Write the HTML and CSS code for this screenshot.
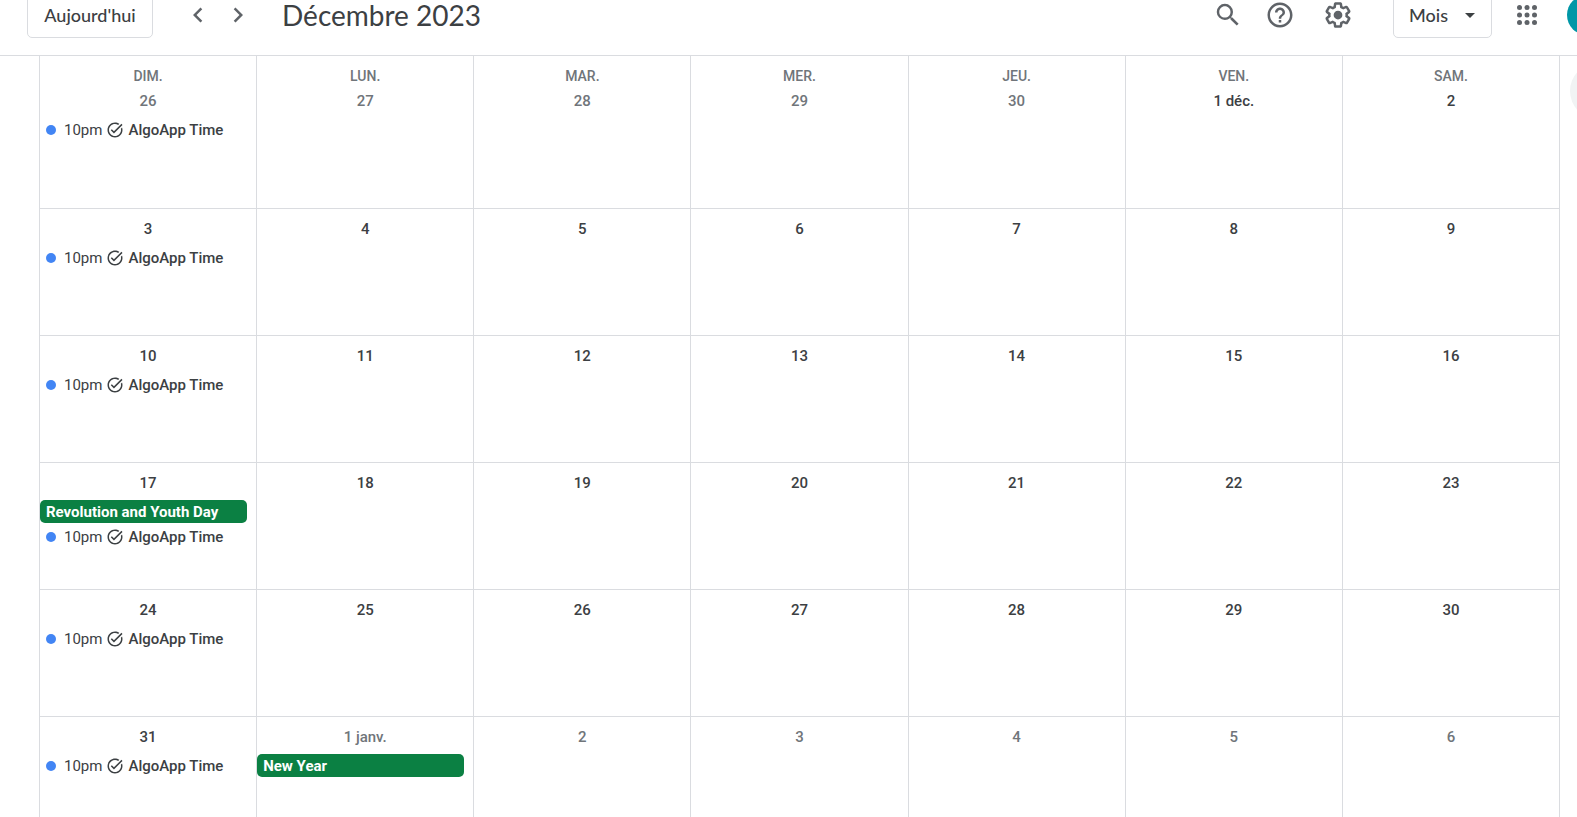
FILE: index.html
```html
<!DOCTYPE html>
<html lang="fr">
<head>
<meta charset="utf-8">
<title>Agenda - Décembre 2023</title>
<link rel="stylesheet" href="styles.css">
</head>
<body>
<svg class="sprite" aria-hidden="true">
  <symbol id="task" viewBox="0 0 24 24"><path d="M22 5.18L10.59 16.6l-4.24-4.24 1.41-1.41 2.83 2.83 10-10L22 5.18zM19.79 10.22C19.92 10.79 20 11.39 20 12c0 4.42-3.58 8-8 8s-8-3.58-8-8c0-4.42 3.58-8 8-8 1.58 0 3.04.46 4.28 1.25l1.44-1.44C16.1 2.67 14.13 2 12 2 6.48 2 2 6.48 2 12c0 5.52 4.48 10 10 10s10-4.48 10-10c0-1.19-.22-2.33-.6-3.39l-1.61 1.61z"/></symbol>
</svg>
<div class="app">
  <header class="topbar">
    <button class="today" type="button">Aujourd'hui</button>
    <nav class="pager">
      <button class="icon-button" type="button" aria-label="Mois précédent"><svg viewBox="0 0 24 24"><path d="M15.41 7.41L14 6l-6 6 6 6 1.41-1.41L10.83 12z"/></svg></button>
      <button class="icon-button" type="button" aria-label="Mois suivant"><svg viewBox="0 0 24 24"><path d="M10 6L8.59 7.41 13.17 12l-4.58 4.59L10 18l6-6z"/></svg></button>
    </nav>
    <h1 class="title">Décembre 2023</h1>
    <div class="tools">
      <button class="icon-button" type="button" aria-label="Rechercher"><svg viewBox="0 0 24 24"><path d="M15.5 14h-.79l-.28-.27A6.47 6.47 0 0 0 16 9.5 6.5 6.5 0 1 0 9.5 16c1.61 0 3.09-.59 4.23-1.57l.27.28v.79l5 4.99L20.49 19l-4.99-5zm-6 0C7.01 14 5 11.99 5 9.5S7.01 5 9.5 5 14 7.01 14 9.5 11.99 14 9.5 14z"/></svg></button>
      <button class="icon-button" type="button" aria-label="Aide"><svg viewBox="0 0 24 24"><path d="M11 18h2v-2h-2v2zm1-16C6.48 2 2 6.48 2 12s4.48 10 10 10 10-4.48 10-10S17.52 2 12 2zm0 18c-4.41 0-8-3.59-8-8s3.59-8 8-8 8 3.59 8 8-3.59 8-8 8zm0-14c-2.21 0-4 1.79-4 4h2c0-1.1.9-2 2-2s2 .9 2 2c0 2-3 1.75-3 5h2c0-2.25 3-2.5 3-5 0-2.21-1.79-4-4-4z"/></svg></button>
      <button class="icon-button settings" type="button" aria-label="Paramètres"><svg viewBox="0 0 24 24"><path d="M13.85 22.25h-3.7c-.74 0-1.36-.54-1.45-1.27l-.27-1.89c-.27-.14-.53-.29-.79-.46l-1.8.72c-.7.26-1.47-.03-1.81-.65L2.2 15.53c-.35-.66-.2-1.44.36-1.88l1.53-1.19c-.01-.15-.02-.3-.02-.46 0-.15.01-.31.02-.46l-1.52-1.19c-.59-.45-.74-1.26-.37-1.88l1.85-3.19c.34-.62 1.11-.9 1.79-.63l1.81.73c.26-.17.52-.32.78-.46l.27-1.91c.09-.7.71-1.25 1.44-1.25h3.7c.74 0 1.36.54 1.45 1.27l.27 1.89c.27.14.53.29.79.46l1.8-.72c.71-.26 1.48.03 1.82.65l1.84 3.18c.36.66.2 1.44-.36 1.88l-1.52 1.19c.01.15.02.3.02.46s-.01.31-.02.46l1.52 1.19c.56.45.72 1.23.37 1.86l-1.86 3.22c-.34.62-1.11.9-1.8.63l-1.8-.72c-.26.17-.52.32-.78.46l-.27 1.91c-.1.68-.72 1.22-1.46 1.22zm-3.23-2h2.76l.37-2.55.53-.22c.44-.18.88-.44 1.34-.78l.45-.34 2.38.96 1.38-2.4-2.03-1.58.07-.56c.03-.26.06-.51.06-.78s-.03-.53-.06-.78l-.07-.56 2.03-1.58-1.39-2.4-2.39.96-.45-.35c-.42-.32-.87-.58-1.33-.77l-.52-.22-.37-2.55h-2.76l-.37 2.55-.53.21c-.44.19-.88.44-1.34.79l-.45.33-2.38-.95-1.39 2.39 2.03 1.58-.07.56a7 7 0 0 0-.06.79c0 .26.02.53.06.78l.07.56-2.03 1.58 1.38 2.4 2.39-.96.45.35c.43.33.86.58 1.33.77l.53.22.38 2.55z"/><circle cx="12" cy="12" r="3.5"/></svg></button>
      <div class="view">
        <select class="view-select" aria-label="Affichage">
          <option>Jour</option><option>Semaine</option><option selected>Mois</option><option>Année</option>
        </select>
        <svg class="view-caret" viewBox="0 0 10 5" aria-hidden="true"><path d="M0 0h10L5 5z"/></svg>
      </div>
      <button class="icon-button apps" type="button" aria-label="Applications"><svg viewBox="0 0 24 24"><circle cx="6" cy="6" r="2"/><circle cx="12" cy="6" r="2"/><circle cx="18" cy="6" r="2"/><circle cx="6" cy="12" r="2"/><circle cx="12" cy="12" r="2"/><circle cx="18" cy="12" r="2"/><circle cx="6" cy="18" r="2"/><circle cx="12" cy="18" r="2"/><circle cx="18" cy="18" r="2"/></svg></button>
      <button class="avatar" type="button" aria-label="Compte"></button>
    </div>
  </header>
  <main class="main">
    <div class="calendar">
    <table class="month">
      <thead>
        <tr><th>DIM.</th><th>LUN.</th><th>MAR.</th><th>MER.</th><th>JEU.</th><th>VEN.</th><th>SAM.</th></tr>
      </thead>
      <tbody>
        <tr>
          <td class="other"><div class="date">26</div><div class="event"><span class="dot"></span><span class="time">10pm</span><svg class="task"><use href="#task"/></svg><span class="name">AlgoApp Time</span></div></td>
          <td class="other"><div class="date">27</div></td>
          <td class="other"><div class="date">28</div></td>
          <td class="other"><div class="date">29</div></td>
          <td class="other"><div class="date">30</div></td>
          <td><div class="date">1 déc.</div></td>
          <td><div class="date">2</div></td>
        </tr>
        <tr>
          <td><div class="date">3</div><div class="event"><span class="dot"></span><span class="time">10pm</span><svg class="task"><use href="#task"/></svg><span class="name">AlgoApp Time</span></div></td>
          <td><div class="date">4</div></td>
          <td><div class="date">5</div></td>
          <td><div class="date">6</div></td>
          <td><div class="date">7</div></td>
          <td><div class="date">8</div></td>
          <td><div class="date">9</div></td>
        </tr>
        <tr>
          <td><div class="date">10</div><div class="event"><span class="dot"></span><span class="time">10pm</span><svg class="task"><use href="#task"/></svg><span class="name">AlgoApp Time</span></div></td>
          <td><div class="date">11</div></td>
          <td><div class="date">12</div></td>
          <td><div class="date">13</div></td>
          <td><div class="date">14</div></td>
          <td><div class="date">15</div></td>
          <td><div class="date">16</div></td>
        </tr>
        <tr>
          <td><div class="date">17</div><div class="event holiday">Revolution and Youth Day</div><div class="event"><span class="dot"></span><span class="time">10pm</span><svg class="task"><use href="#task"/></svg><span class="name">AlgoApp Time</span></div></td>
          <td><div class="date">18</div></td>
          <td><div class="date">19</div></td>
          <td><div class="date">20</div></td>
          <td><div class="date">21</div></td>
          <td><div class="date">22</div></td>
          <td><div class="date">23</div></td>
        </tr>
        <tr>
          <td><div class="date">24</div><div class="event"><span class="dot"></span><span class="time">10pm</span><svg class="task"><use href="#task"/></svg><span class="name">AlgoApp Time</span></div></td>
          <td><div class="date">25</div></td>
          <td><div class="date">26</div></td>
          <td><div class="date">27</div></td>
          <td><div class="date">28</div></td>
          <td><div class="date">29</div></td>
          <td><div class="date">30</div></td>
        </tr>
        <tr>
          <td><div class="date">31</div><div class="event"><span class="dot"></span><span class="time">10pm</span><svg class="task"><use href="#task"/></svg><span class="name">AlgoApp Time</span></div></td>
          <td class="other"><div class="date">1 janv.</div><div class="event holiday">New Year</div></td>
          <td class="other"><div class="date">2</div></td>
          <td class="other"><div class="date">3</div></td>
          <td class="other"><div class="date">4</div></td>
          <td class="other"><div class="date">5</div></td>
          <td class="other"><div class="date">6</div></td>
        </tr>
      </tbody>
    </table>
    </div>
    <aside class="rail"><button class="rail-button" type="button" aria-label="Panneau latéral"></button></aside>
  </main>
</div>
</body>
</html>
```

FILE: styles.css
```css
* { box-sizing: border-box; }

body {
  margin: 0;
  background: #fff;
  color: #3c4043;
  font-family: Roboto, "Liberation Sans", sans-serif;
  font-size: 15px;
}

button { font: inherit; color: inherit; cursor: pointer; }

.sprite { display: none; }

.app {
  display: flex;
  flex-direction: column;
  height: 100vh;
  overflow: hidden;
}

/* Top bar */
.topbar {
  display: flex;
  flex: none;
  align-items: center;
  height: 81px;
  margin-top: -25px;
  padding-left: 27px;
  border-bottom: 1px solid #dadce0;
}

.today {
  min-width: 126px;
  height: 46px;
  padding: 0 15px;
  border: 1px solid #dadce0;
  border-radius: 5px;
  background: #fff;
  font-family: Lato, Roboto, sans-serif;
  font-size: 18px;
  font-weight: 500;
}

.pager {
  display: flex;
  gap: 10px;
  margin-left: 30px;
}

.icon-button {
  display: block;
  width: 30px;
  height: 30px;
  padding: 0;
  border: 0;
  background: none;
}

.icon-button svg {
  display: block;
  width: 30px;
  height: 30px;
  fill: #5f6368;
}

.title {
  margin: 0 0 0 29px;
  font-family: Lato, Roboto, sans-serif;
  font-size: 28px;
  font-weight: 400;
  line-height: 28px;
  white-space: nowrap;
}

.tools {
  display: flex;
  align-items: center;
  gap: 22px;
  margin-left: auto;
  margin-right: -30px;
}

.settings { margin-left: 6px; }

.view {
  display: grid;
  align-items: center;
  margin-left: 18px;
}

.view-select {
  grid-area: 1 / 1;
  width: 99px;
  height: 46px;
  padding: 0 15px;
  border: 1px solid #dadce0;
  border-radius: 5px;
  background: #fff;
  color: #3c4043;
  font-family: Lato, Roboto, sans-serif;
  font-size: 18px;
  font-weight: 500;
  appearance: none;
}

.view-caret {
  grid-area: 1 / 1;
  justify-self: end;
  width: 10px;
  height: 5px;
  margin-right: 17px;
  fill: #3c4043;
  pointer-events: none;
}

.apps { margin-right: 3px; margin-left: -2px; }

.avatar {
  width: 40px;
  height: 40px;
  padding: 0;
  border: 0;
  border-radius: 50%;
  background: #0097a7;
}

/* Month grid */
.main {
  display: flex;
  flex: 1;
  align-items: flex-start;
  min-height: 0;
  padding-left: 39px;
}

.calendar { flex: 1; min-width: 0; }

.month {
  width: 100%;
  table-layout: fixed;
  border-spacing: 0;
  border-right: 1px solid #dadce0;
}

th, td {
  padding: 0;
  border-left: 1px solid #dadce0;
  vertical-align: top;
}

th {
  padding-top: 11px;
  color: #70757a;
  font-size: 14px;
  font-weight: 500;
  line-height: 18px;
}

td {
  height: 127px;
  padding-top: 10px;
  border-top: 1px solid #dadce0;
}

tbody tr:first-child td {
  height: 123px;
  padding-top: 6px;
  border-top: 0;
}

.date {
  margin-bottom: 7px;
  font-weight: 500;
  line-height: 20px;
  text-align: center;
}

.other .date { color: #70757a; }

.event {
  display: flex;
  align-items: center;
  height: 23px;
  margin: 0 9px 2px 0;
  padding-left: 6px;
  line-height: 20px;
  white-space: nowrap;
}

.holiday {
  border-radius: 5px;
  background: #0b8043;
  color: #fff;
  font-weight: 700;
}

.dot {
  width: 10px;
  height: 10px;
  margin-right: 8px;
  border-radius: 50%;
  background: #4285f4;
}

.task {
  width: 18px;
  height: 18px;
  margin: 0 4px;
  fill: #3c4043;
}

.name { font-weight: 500; }

/* Side rail */
.rail {
  flex: none;
  width: 17px;
  padding: 7px 0 0 10px;
  overflow: hidden;
}

.rail-button {
  width: 56px;
  height: 56px;
  padding: 0;
  border: 0;
  border-radius: 50%;
  background: #f1f3f4;
}
```
